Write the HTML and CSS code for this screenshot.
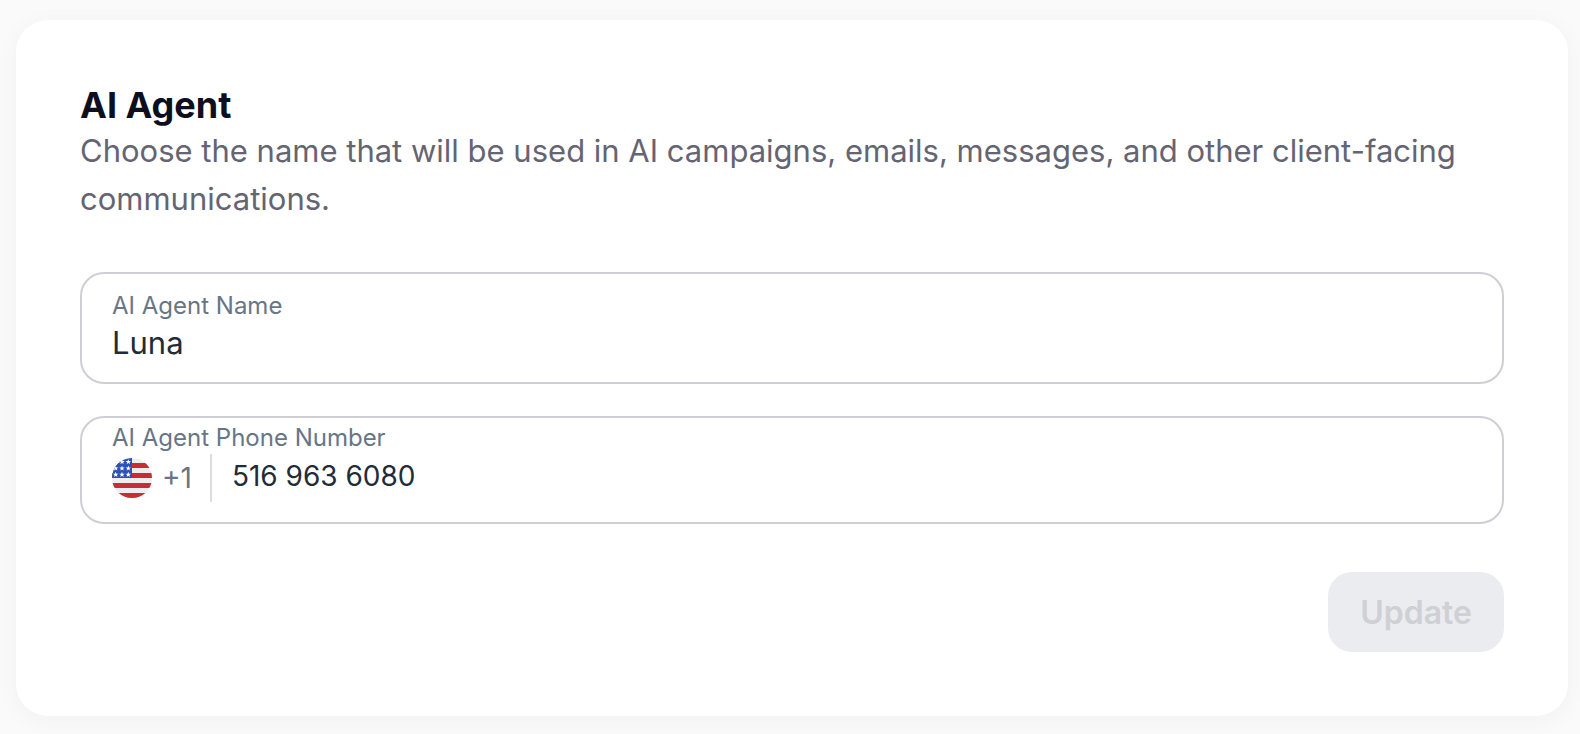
FILE: index.html
```html
<!DOCTYPE html>
<html lang="en">
<head>
    <meta charset="UTF-8">
    <meta name="viewport" content="width=device-width, initial-scale=1.0">
    <title>AI Agent</title>
    <link rel="stylesheet" href="styles.css">
</head>
<body>
    <form class="card">
        <h2 class="card-title">AI Agent</h2>
        <p class="card-text">Choose the name that will be used in AI campaigns, emails, messages, and other client-facing communications.</p>

        <div class="field">
            <label for="agentName">AI Agent Name</label>
            <input type="text" id="agentName" class="name-input" value="Luna">
        </div>

        <div class="field field-phone">
            <label for="agentPhone">AI Agent Phone Number</label>
            <div class="phone-row">
                <div class="country">
                    <svg class="flag" viewBox="0 0 40 40" aria-hidden="true">
                        <defs>
                            <clipPath id="round"><circle cx="20" cy="20" r="20"/></clipPath>
                            <path id="star" d="M0-2.8 .7-.9 2.7-.9 1.1.4 1.7 2.3 0 1.1-1.7 2.3-1.1.4-2.7-.9-.7-.9z"/>
                        </defs>
                        <g clip-path="url(#round)">
                            <rect width="40" height="40" fill="#eeeeee"/>
                            <path d="M0 5h40v5H0zM0 15h40v5H0zM0 25h40v5H0zM0 35h40v5H0z" fill="#c92d2f"/>
                            <rect width="20" height="20" fill="#2a52b5"/>
                            <g fill="#ffffff">
                                <use href="#star" x="10" y="4"/>
                                <use href="#star" x="16.3" y="4"/>
                                <use href="#star" x="3.7" y="10.3"/>
                                <use href="#star" x="10" y="10.3"/>
                                <use href="#star" x="16.3" y="10.3"/>
                                <use href="#star" x="3.7" y="16.6"/>
                                <use href="#star" x="10" y="16.6"/>
                                <use href="#star" x="16.3" y="16.6"/>
                            </g>
                        </g>
                    </svg>
                    <span class="dial-code">+1</span>
                </div>
                <input type="tel" id="agentPhone" class="phone-input" value="516 963 6080">
            </div>
        </div>

        <div class="actions">
            <button type="submit" disabled>Update</button>
        </div>
    </form>
</body>
</html>
```

FILE: styles.css
```css
* {
    box-sizing: border-box;
}
body {
    margin: 0;
    padding: 20px 12px 18px 16px;
    background: #fafafa;
    font-family: Inter, sans-serif;
}
.card {
    padding: 64px;
    background: #fff;
    border-radius: 32px;
    box-shadow: 0 4px 24px rgba(0, 0, 0, 0.04);
}
.card-title {
    margin: 0;
    color: #0d0f1f;
    font-size: 36px;
    font-weight: 700;
    line-height: 43px;
}
.card-text {
    margin: 0 0 49px;
    color: #656472;
    font-size: 31px;
    line-height: 48px;
}
.field {
    display: flex;
    flex-direction: column;
    margin-bottom: 32px;
    padding: 16px 30px 20px;
    border: 2px solid #cfced5;
    border-radius: 24px;
}
.field label {
    color: #677686;
    font-size: 24px;
    line-height: 32px;
}
.field input {
    width: 100%;
    padding: 0;
    border: none;
    outline: none;
    background: transparent;
    color: #222c39;
    font-family: inherit;
}
.name-input {
    height: 40px;
    font-size: 31px;
}
.field-phone {
    margin-bottom: 48px;
    padding: 4px 30px 20px;
}
.phone-row {
    display: flex;
    gap: 20px;
    height: 48px;
}
.country {
    display: flex;
    align-items: center;
    gap: 10px;
    height: 48px;
    padding-right: 18px;
    border-right: 2px solid #dcdce0;
}
.flag {
    width: 40px;
    height: 40px;
}
.dial-code {
    color: #677686;
    font-size: 28px;
}
.phone-row .phone-input {
    height: 44px;
    font-size: 28px;
}
.actions {
    display: flex;
    justify-content: flex-end;
}
button {
    height: 80px;
    padding: 0 32px;
    border: none;
    border-radius: 24px;
    background: #ebecf0;
    color: #cfd0d4;
    font-family: inherit;
    font-size: 32px;
    font-weight: 600;
}
```
